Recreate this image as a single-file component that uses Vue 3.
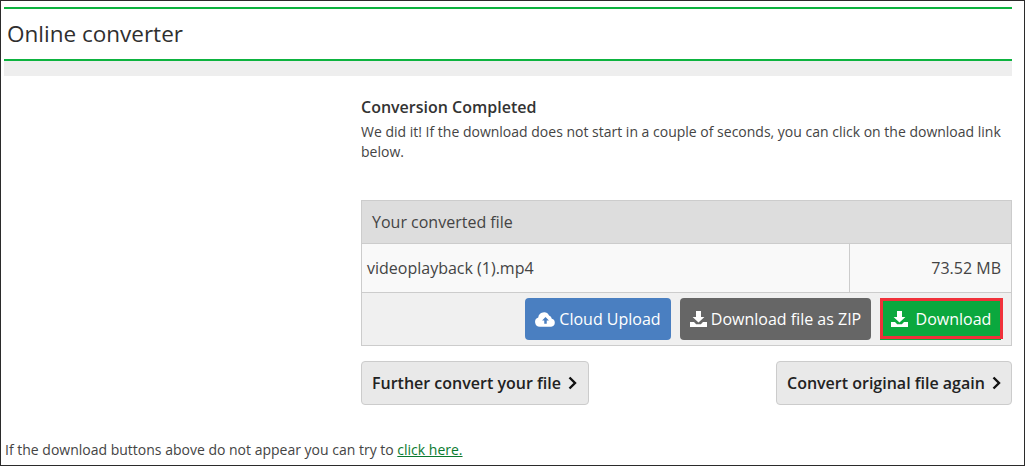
<template>
  <div class="page">
    <header class="title-block">
      <h1 class="title">Online converter</h1>
    </header>
    <div class="band"></div>

    <main class="content">
      <div class="side"></div>
      <section class="result">
        <h2 class="done-title">Conversion Completed</h2>
        <p class="done-text">
          We did it! If the download does not start in a couple of seconds, you can click on the download link below.
        </p>

        <div class="file-box">
          <div class="file-head">Your converted file</div>
          <div class="file-row">
            <div class="file-name">{{ file.name }}</div>
            <div class="file-size">{{ file.size }}</div>
          </div>
          <div class="file-actions">
            <a class="btn btn-blue">
              <svg class="ico-cloud" viewBox="0 0 22 15" width="21" height="15">
                <path fill="#fff" d="M5 15a5 5 0 0 1-1.6-9.7A6 6 0 0 1 14.7 3.2 4 4 0 0 1 17.6 6.6 4.3 4.3 0 0 1 17 15Z" />
                <path fill="#4a7fc1" d="M11 4.8l3.6 3.8h-2.3V12H9.7V8.6H7.4Z" />
              </svg>
              Cloud Upload
            </a>
            <a class="btn btn-gray">
              <svg class="ico-dl" viewBox="0 0 17 16" width="17" height="16">
                <path fill="#fff" d="M6 0h5v6h3.4L8.5 11.6 2.6 6H6Z" />
                <path fill="#fff" d="M0 11h4l2.2 2.2h4.6L13 11h4v5H0Z" />
              </svg>
              Download file as ZIP
            </a>
            <a class="btn btn-green">
              <svg class="ico-dl ico-wide" viewBox="0 0 17 16" width="17" height="16">
                <path fill="#fff" d="M6 0h5v6h3.4L8.5 11.6 2.6 6H6Z" />
                <path fill="#fff" d="M0 11h4l2.2 2.2h4.6L13 11h4v5H0Z" />
              </svg>
              Download
            </a>
          </div>
        </div>

        <div class="next-steps">
          <a class="btn-light btn-further">
            Further convert your file
            <svg viewBox="0 0 9 14" width="9" height="14"><path d="M1.5 1.5 7 7l-5.5 5.5" fill="none" stroke="#111" stroke-width="2.4" /></svg>
          </a>
          <a class="btn-light btn-again">
            Convert original file again
            <svg viewBox="0 0 9 14" width="9" height="14"><path d="M1.5 1.5 7 7l-5.5 5.5" fill="none" stroke="#111" stroke-width="2.4" /></svg>
          </a>
        </div>
      </section>
    </main>

    <p class="fallback">
      If the download buttons above do not appear you can try to <a class="fallback-link">click here.</a>
    </p>
  </div>
</template>

<script setup>
const file = {
  name: 'videoplayback (1).mp4',
  size: '73.52 MB'
}
</script>

<style>
html,
body {
  margin: 0;
  background: #fff;
  overflow: hidden;
}
</style>

<style scoped>
.page {
  box-sizing: border-box;
  width: 1025px;
  height: 466px;
  padding: 6px 12px 0 3px;
  border: 1px solid #2b2b2b;
  font-family: "Open Sans", sans-serif;
  font-size: 14px;
  line-height: 20px;
  color: #444;
  background: #fff;
}

.title-block {
  box-sizing: border-box;
  height: 54px;
  border-top: 2px solid #0db33f;
  border-bottom: 2px solid #0db33f;
}

.title {
  margin: 0;
  padding: 10px 0 0 3px;
  font-size: 22.5px;
  line-height: 30px;
  font-weight: 500;
  color: #2f2f2f;
}

.band {
  height: 15px;
  background: #eee;
}

.content {
  display: grid;
  grid-template-columns: 357px 1fr;
}

.done-title {
  margin: 20px 0 0;
  font-size: 16px;
  line-height: 22px;
  font-weight: 600;
  color: #333;
}

.done-text {
  margin: 4px 0 0;
}

.file-box {
  margin-top: 38px;
  border: 1px solid #ccc;
}

.file-head {
  height: 42px;
  padding-left: 10px;
  font-size: 16px;
  line-height: 42px;
  background: #ddd;
  border-bottom: 1px solid #ccc;
}

.file-row {
  display: grid;
  grid-template-columns: 488px 1fr;
  height: 48px;
  font-size: 16px;
  line-height: 48px;
  background: #f9f9f9;
  border-bottom: 1px solid #ccc;
}

.file-name {
  padding-left: 5px;
  border-right: 1px solid #ccc;
}

.file-size {
  padding-right: 10px;
  text-align: right;
}

.file-actions {
  display: flex;
  justify-content: flex-end;
  align-items: flex-start;
  gap: 9px;
  height: 52px;
  padding: 5px 8px 0 0;
  box-sizing: border-box;
  background: #f0f0f0;
}

.btn {
  display: flex;
  align-items: center;
  justify-content: center;
  box-sizing: border-box;
  height: 42px;
  font-size: 16px;
  color: #fff;
  border-radius: 4px;
  white-space: nowrap;
}

.btn-blue {
  width: 146px;
  background: #4a7fc1;
}

.ico-cloud {
  margin-right: 3px;
}

.btn-gray {
  width: 191px;
  background: #666;
}

.ico-dl {
  margin-right: 4px;
}

.ico-wide {
  margin-right: 8px;
}

.btn-green {
  width: 123px;
  height: 41px;
  padding-right: 1px;
  background: #0ba83e;
  border: 3px solid #f0313a;
  border-radius: 0;
  box-shadow: -1px 2px 0 -1px #0ba83e;
}

.next-steps {
  display: flex;
  justify-content: space-between;
  margin-top: 15px;
}

.btn-light {
  display: flex;
  align-items: center;
  gap: 7px;
  box-sizing: border-box;
  height: 44px;
  padding: 0 10px;
  font-size: 16px;
  font-weight: 600;
  color: #222;
  background: #e9e9e9;
  border: 1px solid #ccc;
  border-radius: 4px;
  white-space: nowrap;
}

.btn-further {
  width: 228px;
}

.btn-again {
  width: 236px;
}

.fallback {
  margin: 35px 0 0;
  padding-left: 1px;
}

.fallback-link {
  color: #0a7a30;
  text-decoration: underline;
}
</style>
